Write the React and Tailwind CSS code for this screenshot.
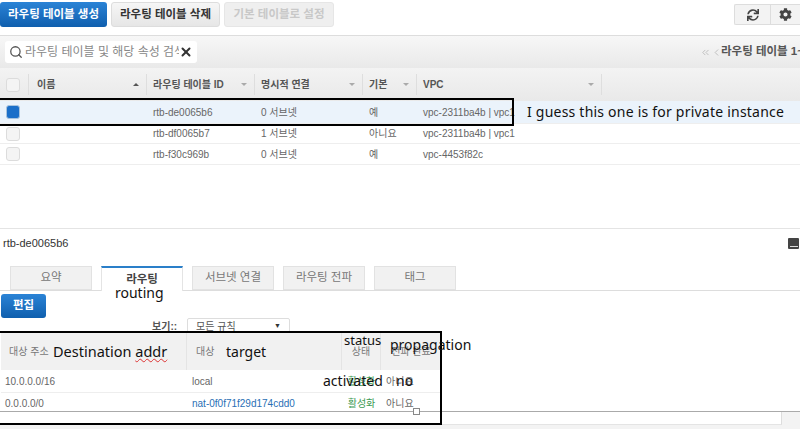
import { Search, X, ChevronsLeft, ChevronLeft } from "lucide-react";
import { FaSync, FaCog } from "react-icons/fa";

const routeTables = [
  { id: "rtb-de0065b6", subnets: "0 서브넷", main: "예", vpc: "vpc-2311ba4b | vpc1", height: "h-[23px] bg-[#ebf3fb]", selected: true },
  { id: "rtb-df0065b7", subnets: "1 서브넷", main: "아니요", vpc: "vpc-2311ba4b | vpc1", height: "h-[20px]" },
  { id: "rtb-f30c969b", subnets: "0 서브넷", main: "예", vpc: "vpc-4453f82c", height: "h-[21px]" },
];

const tabs = ["요약", "라우팅", "서브넷 연결", "라우팅 전파", "태그"];

const tableCols = "grid grid-cols-[29px_118px_108px_108px_54px_185px_1fr]";
const routeCols = "grid grid-cols-[186px_155px_39px_60px]";

function Caret({ up }) {
  return (
    <span
      className={`w-0 h-0 border-x-[3px] border-x-transparent ${up ? "border-b-[3px] border-b-[#555]" : "border-t-[3px] border-t-[#aaa]"}`}
    />
  );
}

function Checkbox({ on }) {
  return (
    <span
      className={`block w-[14px] h-[14px] rounded-[3px] border ${on ? "bg-[#1b6fc9] border-[#a9c4de]" : "bg-[#f4f4f4] border-[#dcdcdc]"}`}
    />
  );
}

function HeaderCell({ label, caret, up, className = "" }) {
  return (
    <div className={`flex items-center justify-between border-r border-[#dedede] h-[21px] pl-[6px] pr-[7px] font-bold text-[#555] ${className}`}>
      <span>{label}</span>
      {caret && <Caret up={up} />}
    </div>
  );
}

export default function App() {
  return (
    <div className="relative w-[800px] h-[429px] overflow-hidden bg-white text-[10px] text-[#666] font-['Liberation_Sans','Noto_Sans_CJK_KR',sans-serif]">
      {/* Toolbar */}
      <div className="h-[35px] pt-[2px] flex items-start">
        <button className="w-[107px] h-[25px] rounded-[3px] bg-gradient-to-b from-[#2a83d6] to-[#0f5fae] text-white font-bold text-[11.5px]">
          라우팅 테이블 생성
        </button>
        <button className="ml-[4px] w-[109px] h-[25px] rounded-[3px] border border-[#ddd] bg-gradient-to-b from-[#f6f6f6] to-[#e6e6e6] text-[#333] font-bold text-[11.5px]">
          라우팅 테이블 삭제
        </button>
        <button className="ml-[4px] w-[110px] h-[25px] rounded-[3px] border border-[#e6e6e6] bg-[#efefef] text-[#c8c8c8] font-bold text-[11.5px]">
          기본 테이블로 설정
        </button>
        <div className="ml-auto mt-[2px] flex h-[21px] w-[66px] rounded-l-[2px] border border-r-0 border-[#ddd] bg-[#f3f3f3]">
          <div className="w-[36px] flex items-center justify-center border-r border-[#ddd]">
            <FaSync size={12} className="text-[#444]" />
          </div>
          <div className="flex-1 flex items-center justify-center">
            <FaCog size={13} className="text-[#444]" />
          </div>
        </div>
      </div>

      {/* Search bar */}
      <div className="h-[33px] border-t border-[#ddd] bg-gradient-to-b from-[#f7f7f7] to-[#e9e9e9] flex items-center pl-[5px]">
        <div className="w-[192px] h-[22px] bg-white rounded-[3px] flex items-center pl-[4px] overflow-hidden">
          <Search size={14} strokeWidth={2.2} className="text-[#555] shrink-0" />
          <span className="ml-[2px] w-[154px] shrink-0 overflow-hidden whitespace-nowrap text-[12px] text-[#888]">
            라우팅 테이블 및 해당 속성 검색
          </span>
          <X size={14} strokeWidth={3.4} className="text-[#333] shrink-0" />
        </div>
        <div className="ml-auto flex items-center overflow-hidden whitespace-nowrap w-[100px] font-bold text-[11.5px] text-[#555]">
          <ChevronsLeft size={11} className="text-[#bbb] shrink-0" />
          <ChevronLeft size={11} className="text-[#bbb] shrink-0" />
          <span className="ml-[-1px]">라우팅 테이블 1~3</span>
        </div>
      </div>

      {/* Route table */}
      <div className={`${tableCols} h-[33px] items-center bg-gradient-to-b from-[#f3f3f3] to-[#e9e9e9]`}>
        <div className="pl-[6px] border-r border-[#dedede] h-[21px] flex items-center"><Checkbox /></div>
        <HeaderCell label="이름" caret up className="pl-[8px]" />
        <HeaderCell label="라우팅 테이블 ID" caret />
        <HeaderCell label="명시적 연결" caret />
        <HeaderCell label="기본" caret />
        <HeaderCell label="VPC" caret />
        <div />
      </div>
      {routeTables.map(r => (
        <div key={r.id} className={`${tableCols} items-center border-b border-[#eee] ${r.height}`}>
          <div className="pl-[6px]"><Checkbox on={r.selected} /></div>
          <div />
          <div className="pl-[6px]">{r.id}</div>
          <div className="pl-[6px]">{r.subnets}</div>
          <div className="pl-[6px]">{r.main}</div>
          <div className="pl-[6px] whitespace-nowrap">{r.vpc}</div>
          <div />
        </div>
      ))}

      {/* Details pane */}
      <div className="mt-[63px] border-t border-[#e4e4e4] h-[38px] pt-[6px] flex items-start justify-between">
        <span className="pl-[3px] text-[#333] text-[11px]">rtb-de0065b6</span>
        <span className="mt-[3px] w-[11px] h-[11px] rounded-[1px] bg-[#444] flex items-end justify-center pb-[2px] mr-[1px]">
          <span className="block w-[8px] h-[1px] bg-[#ddd]" />
        </span>
      </div>
      <div className="h-[25px] border-b border-[#ddd] flex pl-[10px] gap-[9px]">
        {tabs.map(tab => (
          <div
            key={tab}
            className={
              tab === "라우팅"
                ? "w-[82px] h-[25px] border-t-2 border-x border-t-[#2a7fc9] border-x-[#e4e4e4] bg-white flex items-center justify-center text-[11.5px] font-bold text-[#444]"
                : "w-[82px] h-[24px] border border-[#e2e2e2] bg-[#f1f1f1] flex items-center justify-center text-[11.5px] text-[#777]"
            }
          >
            {tab}
          </div>
        ))}
      </div>
      <div className="pt-[3px] pl-[1px]">
        <button className="w-[45px] h-[24px] rounded-[3px] bg-gradient-to-b from-[#2a83d6] to-[#0f5fae] text-white font-bold text-[11.5px]">
          편집
        </button>
      </div>
      <div className="flex items-start h-[14px] pl-[152px]">
        <span className="font-bold text-[#555] w-[35px] pt-[1px]">보기::</span>
        <div className="w-[103px] h-[17px] rounded-[2px] border border-[#ddd] bg-white flex items-center justify-between px-[8px] text-[#555]">
          <span>모든 규칙</span>
          <span className="text-[7px] text-[#333]">▼</span>
        </div>
      </div>

      {/* Routes */}
      <div className="relative w-[440px] ml-[1px]">
        <div className={`${routeCols} h-[38px] bg-[#f1f1f1] items-center text-[#777]`}>
          <div className="pl-[8px] h-full flex items-center border-r border-[#e4e4e4]">대상 주소</div>
          <div className="pl-[9px] h-full flex items-center border-r border-[#e4e4e4]">대상</div>
          <div className="h-full flex items-center justify-center border-r border-[#e4e4e4]">상태</div>
          <div className="text-center">전파 완료</div>
        </div>
        <div className={`${routeCols} h-[23px] items-center border-b border-[#eee]`}>
          <div className="pl-[4px]">10.0.0.0/16</div>
          <div className="pl-[5px]">local</div>
          <div className="text-center text-[#3c9a53]">활성화</div>
          <div className="pl-[5px]">아니요</div>
        </div>
        <div className={`${routeCols} h-[21px] items-center`}>
          <div className="pl-[4px]">0.0.0.0/0</div>
          <div className="pl-[5px] text-[#2a6fb5] whitespace-nowrap">nat-0f0f71f29d174cdd0</div>
          <div className="text-center text-[#3c9a53] whitespace-nowrap">활성화</div>
          <div className="pl-[5px]">아니요</div>
        </div>
      </div>

      {/* Pasted resize frame along the bottom */}
      <div className="absolute left-0 top-[411px] w-[800px] h-[18px] bg-[#f3f3f3] border-t border-[#aaa]">
        <div className="w-[782px] h-[13px] bg-white border-r border-b border-r-[#ddd] border-b-[#e4e4e4]" />
      </div>
      <span className="absolute left-[413px] top-[408px] w-[7px] h-[7px] bg-white border border-[#888]" />

      {/* Annotations */}
      <div className="absolute left-0 top-[98px] w-[514px] h-[28px] border-[2px] border-l-0 border-black" />
      <div className="absolute left-0 top-[331px] w-[442px] h-[94px] border-[2px] border-l-0 border-black" />
      <div className="font-['Noto_Sans',sans-serif] text-[#111]">
        <span className="absolute left-[527px] top-[101px] text-[14px] tracking-[0.22px] whitespace-nowrap">I guess this one is for private instance</span>
        <span className="absolute left-[115px] top-[282px] text-[14px] whitespace-nowrap">routing</span>
        <span className="absolute left-[53px] top-[341px] text-[14.5px] whitespace-nowrap">
          Destination <span className="underline decoration-wavy decoration-[#d33] decoration-1">addr</span>
        </span>
        <span className="absolute left-[226px] top-[341px] text-[14px] whitespace-nowrap">target</span>
        <span className="absolute left-[344px] top-[331px] text-[13px] whitespace-nowrap">status</span>
        <span className="absolute left-[390px] top-[334px] text-[14px] whitespace-nowrap">propagation</span>
        <span className="absolute left-[323px] top-[370px] text-[14px] whitespace-nowrap">activated</span>
        <span className="absolute left-[396px] top-[370px] text-[14px] whitespace-nowrap">no</span>
      </div>
    </div>
  );
}
